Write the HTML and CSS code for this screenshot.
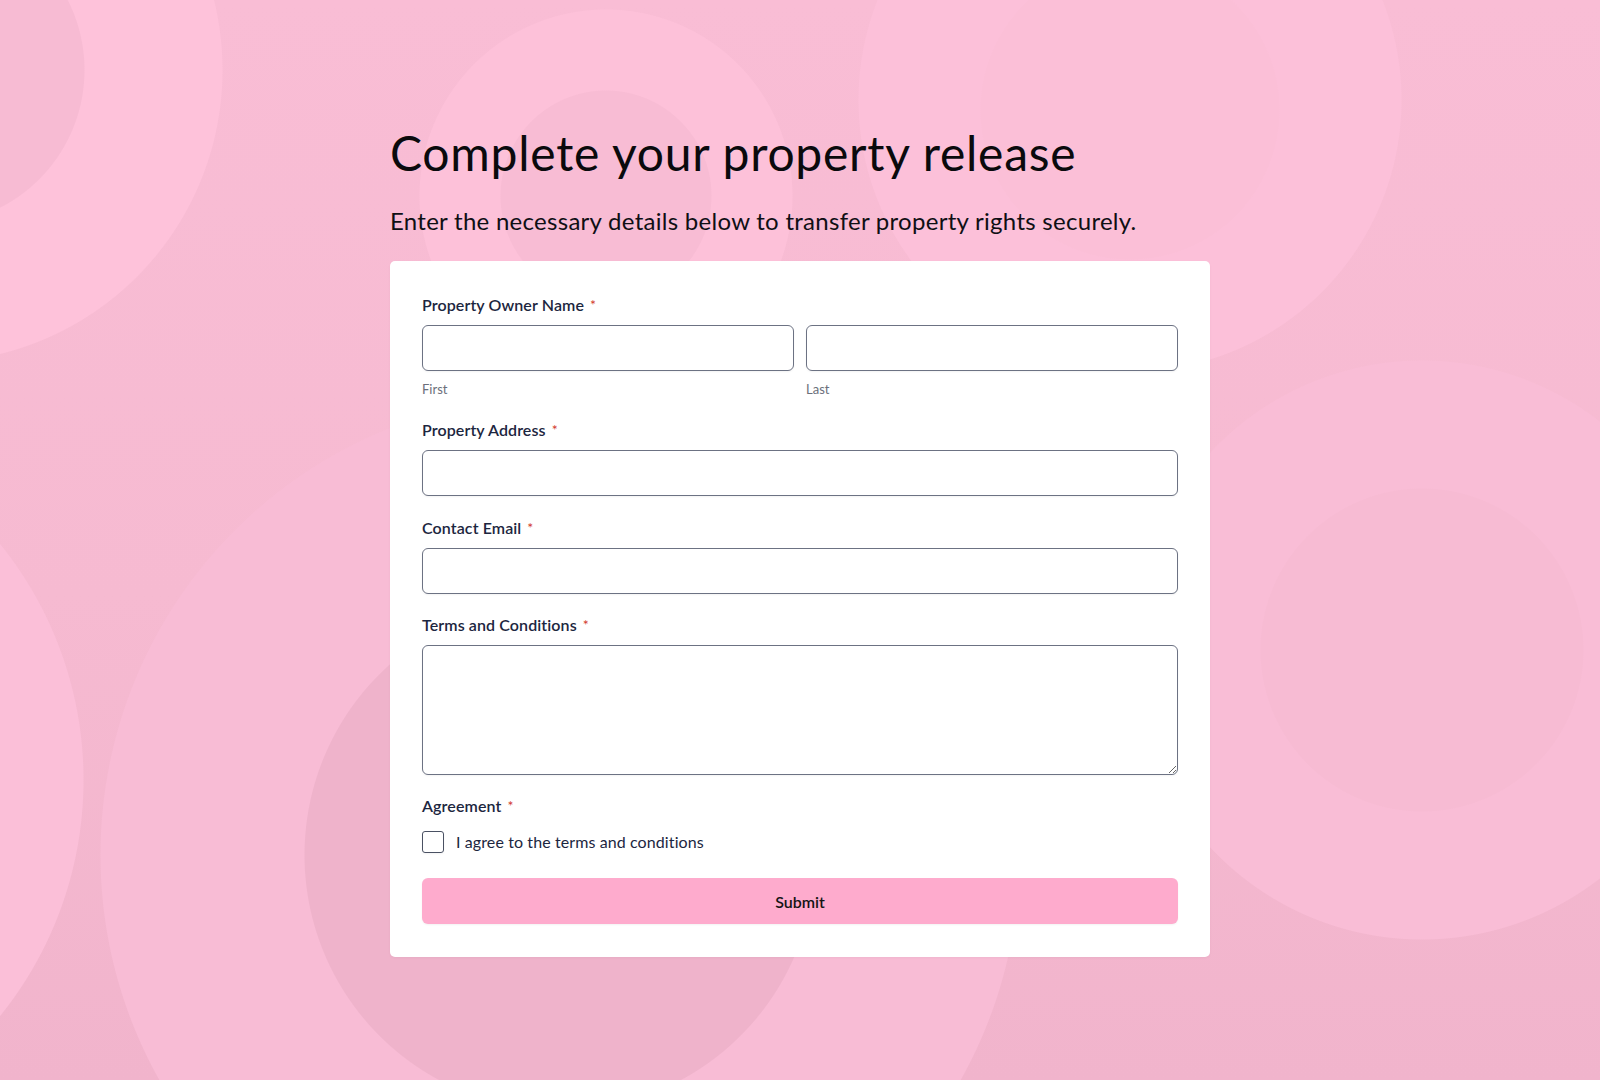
FILE: index.html
```html
<!DOCTYPE html>
<html lang="en">
<head>
<meta charset="utf-8">
<title>Complete your property release</title>
<link rel="stylesheet" href="styles.css">
</head>
<body>
<main class="page">
  <h1 class="title">Complete your property release</h1>
  <p class="subtitle">Enter the necessary details below to transfer property rights securely.</p>
  <form class="card">
    <div class="field field-name">
      <label class="label">Property Owner Name<span class="req">*</span></label>
      <div class="name-row">
        <div class="name-col">
          <input class="input" type="text">
          <div class="hint">First</div>
        </div>
        <div class="name-col">
          <input class="input" type="text">
          <div class="hint">Last</div>
        </div>
      </div>
    </div>
    <div class="field">
      <label class="label">Property Address<span class="req">*</span></label>
      <input class="input" type="text">
    </div>
    <div class="field">
      <label class="label">Contact Email<span class="req">*</span></label>
      <input class="input" type="email">
    </div>
    <div class="field field-terms">
      <label class="label">Terms and Conditions<span class="req">*</span></label>
      <textarea class="input textarea"></textarea>
    </div>
    <div class="field field-agree">
      <label class="label label-agree">Agreement<span class="req">*</span></label>
      <label class="check-row">
        <input class="checkbox" type="checkbox">
        <span class="check-text">I agree to the terms and conditions</span>
      </label>
    </div>
    <button class="submit" type="button">Submit</button>
  </form>
</main>
</body>
</html>
```

FILE: styles.css
```css
html, body {
  margin: 0;
  padding: 0;
}

body {
  min-height: 1080px;
  font-family: Lato, "Noto Sans", "Liberation Sans", sans-serif;
  color: #0b0b0f;
  background-color: #f6bad2;
  background-image:
    radial-gradient(circle 155px at -70px 70px, #f7bbd3 154px, rgba(247,187,211,0) 155px),
    radial-gradient(circle 293px at -70px 70px, #fec2da 292px, rgba(254,194,218,0) 293px),
    radial-gradient(circle 106px at 606px 196px, #f8bcd4 105px, rgba(248,188,212,0) 106px),
    radial-gradient(circle 187px at 606px 196px, #fdc1d9 186px, rgba(253,193,217,0) 187px),
    radial-gradient(circle 150px at 1130px 110px, #fbbfd7 149px, rgba(251,191,215,0) 150px),
    radial-gradient(circle 272px at 1130px 100px, #fcc0d9 271px, rgba(252,192,217,0) 272px),
    radial-gradient(circle 256px at 560px 855px, #efb3cb 255px, rgba(239,179,203,0) 256px),
    radial-gradient(circle 460px at 560px 855px, #f8bcd5 459px, rgba(248,188,213,0) 460px),
    radial-gradient(circle 376px at -292px 780px, #fbbfd8 375px, rgba(251,191,216,0) 376px),
    radial-gradient(circle 162px at 1422px 650px, #f7bbd3 161px, rgba(247,187,211,0) 162px),
    radial-gradient(circle 290px at 1422px 650px, #f9bdd6 289px, rgba(249,189,214,0) 290px),
    linear-gradient(180deg, #f9bdd5 0%, #f6bad1 55%, #f1b4cc 100%);
  background-repeat: no-repeat;
}

.page {
  width: 820px;
  margin: 0 auto;
  padding-top: 124px;
}

.title {
  margin: 0 0 25px;
  font-size: 48px;
  line-height: 1.2;
  font-weight: 400;
  color: #0a0a0d;
  letter-spacing: 0.75px;
}

.subtitle {
  margin: 0 0 26px;
  font-size: 24px;
  line-height: 1.2;
  font-weight: 400;
  color: #0f0f14;
  letter-spacing: 0.28px;
}

.card {
  display: flex;
  flex-direction: column;
  background: #ffffff;
  border-radius: 5px;
  padding: 33px 32px 33px;
  box-shadow: 0 1px 3px rgba(0, 0, 0, 0.04);
}

.field {
  margin-bottom: 20.5px;
}

.field-name {
  margin-bottom: 22px;
}

.field-terms {
  margin-bottom: 20px;
}

.field-agree {
  margin-bottom: 25px;
}

.label {
  display: block;
  font-size: 16px;
  line-height: 21px;
  font-weight: 600;
  color: #1c2640;
  margin-bottom: 10px;
  letter-spacing: 0.1px;
}

.label-agree {
  margin-bottom: 15px;
}

.req {
  color: #d23a2e;
  font-size: 14px;
  font-weight: 400;
  margin-left: 6px;
  vertical-align: 1px;
}

.name-row {
  display: grid;
  grid-template-columns: 1fr 1fr;
  gap: 12px;
}

.input {
  display: block;
  box-sizing: border-box;
  width: 100%;
  height: 46px;
  margin: 0;
  padding: 8px 12px;
  border: 1px solid #6c7283;
  border-radius: 6px;
  background: #ffffff;
  box-shadow: 0 1px 2px rgba(0, 0, 0, 0.05);
  font-family: inherit;
  font-size: 16px;
  outline: none;
}

.textarea {
  height: 130px;
  resize: vertical;
}

.hint {
  margin-top: 10px;
  font-size: 13px;
  line-height: 16px;
  color: #6b6f7b;
}

.check-row {
  display: flex;
  align-items: center;
  gap: 12px;
  height: 22px;
  cursor: pointer;
}

.checkbox {
  appearance: none;
  -webkit-appearance: none;
  box-sizing: border-box;
  width: 22px;
  height: 22px;
  margin: 0;
  border: 1px solid #4a5163;
  border-radius: 3px;
  background: #fff;
  box-shadow: 0 1px 2px rgba(0, 0, 0, 0.05);
}

.check-text {
  font-size: 16px;
  line-height: 20px;
  color: #1c2640;
  letter-spacing: 0.1px;
}

.submit {
  display: block;
  width: 100%;
  height: 46px;
  border: none;
  border-radius: 6px;
  background: #feabcd;
  box-shadow: 0 1px 2px rgba(0, 0, 0, 0.05);
  font-family: inherit;
  font-size: 16px;
  font-weight: 600;
  color: #141414;
  cursor: pointer;
}
```
